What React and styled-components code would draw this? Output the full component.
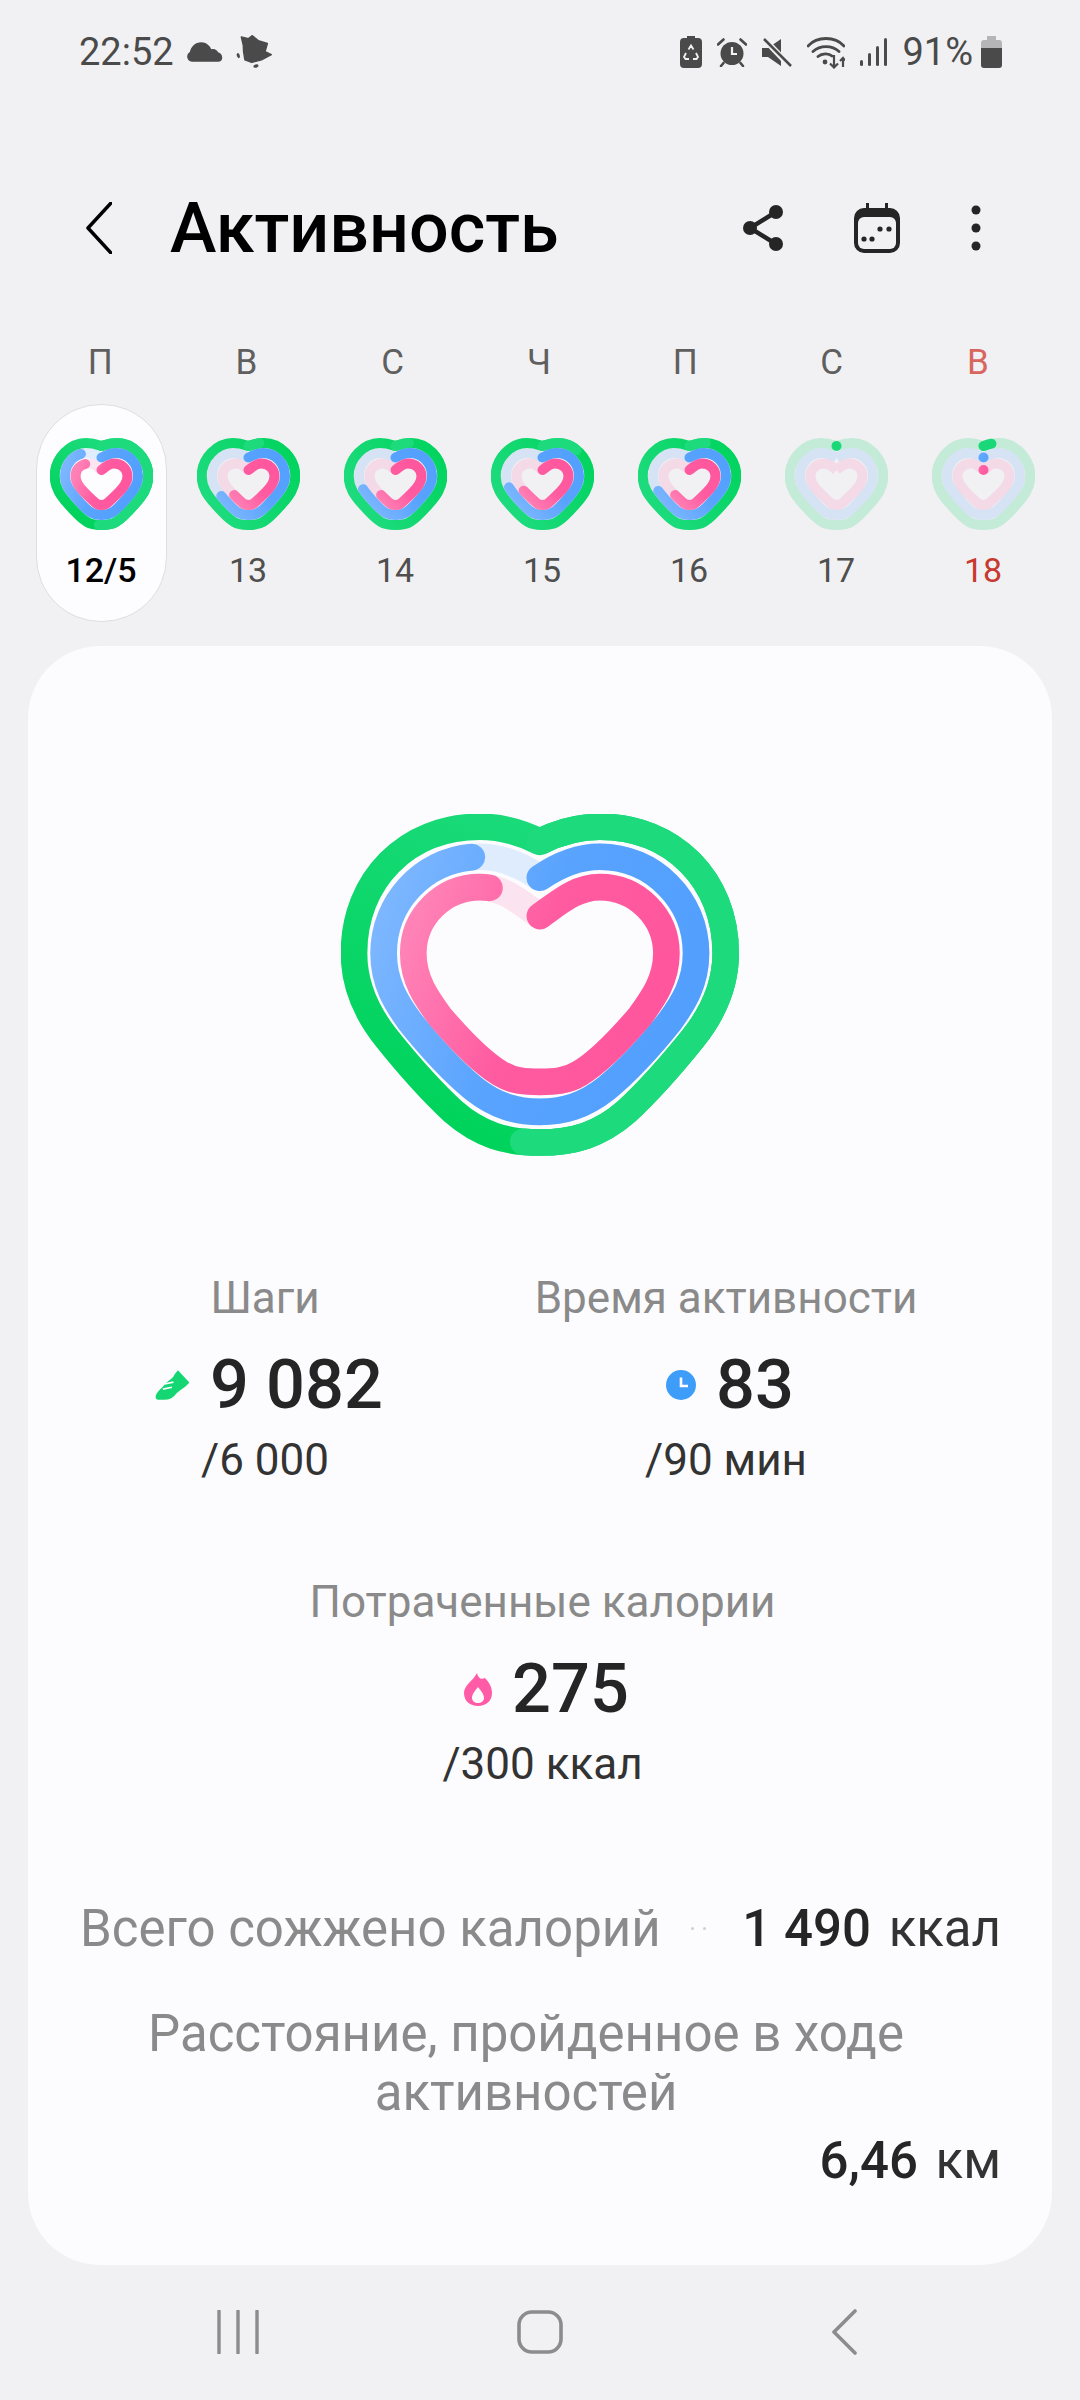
import styled, { createGlobalStyle } from "styled-components";
import { useId } from "react";

const GlobalStyle = createGlobalStyle`
  html, body {
    margin: 0;
    padding: 0;
    background: #f1f1f3;
    font-family: Roboto, "Liberation Sans", sans-serif;
  }
`;

// heart loops run clockwise from the notch, only the right half is written
function heartLoop(cx, startY, segs) {
  const mirror = (x) => 2 * cx - x;
  let d = `M${cx} ${startY}`;
  segs.forEach(([a, b, c, e, x, y]) => {
    d += ` C${a} ${b} ${c} ${e} ${x} ${y}`;
  });
  const points = [[cx, startY], ...segs.map((s) => [s[4], s[5]])];
  for (let i = segs.length - 1; i >= 0; i--) {
    const [a, b, c, e] = segs[i];
    const [px, py] = points[i];
    d += ` C${mirror(c)} ${e} ${mirror(a)} ${b} ${mirror(px)} ${py}`;
  }
  return d;
}

const bigHeart = {
  viewBox: "63 72 1195 1026",
  stroke: 80,
  green: heartLoop(660, 155, [
    [720, 125, 780, 110, 840, 110],
    [1060, 110, 1218, 270, 1218, 490],
    [1218, 590, 1180, 670, 1120, 745],
    [1060, 820, 990, 900, 920, 965],
    [840, 1035, 760, 1058, 660, 1058],
  ]),
  blue: heartLoop(660, 263, [
    [720, 222, 780, 200, 840, 200],
    [1000, 200, 1129, 330, 1129, 490],
    [1129, 580, 1090, 640, 1050, 695],
    [990, 770, 920, 845, 860, 895],
    [790, 950, 730, 966, 660, 966],
  ]),
  pink: heartLoop(660, 378, [
    [720, 335, 770, 291, 840, 291],
    [950, 291, 1040, 380, 1040, 490],
    [1040, 570, 1000, 625, 960, 680],
    [900, 750, 830, 820, 780, 850],
    [740, 875, 700, 876, 660, 876],
  ]),
};

const smallHeart = {
  viewBox: "0 0 103 92",
  stroke: 10,
  green: heartLoop(51.5, 8, [
    [56, 6.5, 60, 5, 67, 5],
    [83, 5, 98.3, 20, 98.3, 38],
    [98.3, 50, 92, 58, 85, 66],
    [78, 74, 71, 81, 66, 84],
    [61, 87, 56, 87, 51.5, 87],
  ]),
  blue: heartLoop(51.5, 19.5, [
    [56, 17, 60, 15, 66, 15],
    [78, 15, 88, 25, 88, 38],
    [88, 47, 83, 53, 77, 60],
    [71, 67, 65, 73, 61, 75],
    [57, 77, 54, 77, 51.5, 77],
  ]),
  pink: heartLoop(51.5, 32, [
    [55, 29, 59, 25.5, 64, 25.5],
    [71.5, 25.5, 77.5, 31, 77.5, 38],
    [77.5, 44, 74, 49, 69, 54],
    [64, 59, 59, 64, 56, 66],
    [54, 67, 53, 67, 51.5, 67],
  ]),
};

function Track({ d, stroke, color }) {
  return <path d={d} fill="none" stroke={color} strokeWidth={stroke} strokeLinejoin="miter" />;
}

function Ring({ d, stroke, color, progress }) {
  if (progress === undefined) return null;
  return (
    <path
      d={d}
      pathLength="100"
      fill="none"
      stroke={color}
      strokeWidth={stroke}
      strokeLinecap="round"
      strokeDasharray={`${progress} 300`}
    />
  );
}

function Heart({ shape, width, height, green, lap, blue, pink, wrapped }) {
  const id = useId();
  // finished rings fade towards their end: bottom left on the later days, top left on the first
  const fade = wrapped ? { x1: "1", y1: "0", x2: "0", y2: "0.7" } : { x1: "1", y1: "0.5", x2: "0", y2: "0.2" };
  return (
    <svg width={width} height={height} viewBox={shape.viewBox}>
      <defs>
        <linearGradient id={`${id}g`} x1={wrapped ? "1" : "0.2"} y1={wrapped ? "0" : "0.9"} x2={wrapped ? "0" : "0.7"} y2={wrapped ? "0.6" : "0"}>
          <stop offset="0" stopColor="#00d35c" />
          <stop offset="1" stopColor="#1ddb7d" />
        </linearGradient>
        <linearGradient id={`${id}b`} {...fade}>
          <stop offset="0" stopColor="#529ffe" />
          <stop offset="0.5" stopColor="#58a3fe" />
          <stop offset="1" stopColor="#7cb6ff" />
        </linearGradient>
        <linearGradient id={`${id}p`} {...fade}>
          <stop offset="0" stopColor="#ff569d" />
          <stop offset="0.5" stopColor="#ff5ba0" />
          <stop offset="1" stopColor="#ff82b6" />
        </linearGradient>
      </defs>
      <Track d={shape.green} stroke={shape.stroke} color="rgba(16,214,112,0.2)" />
      <Track d={shape.blue} stroke={shape.stroke} color="rgba(90,165,250,0.18)" />
      <Track d={shape.pink} stroke={shape.stroke} color="rgba(255,90,160,0.15)" />
      {green === 100 && <Track d={shape.green} stroke={shape.stroke} color={`url(#${id}g)`} />}
      {green < 100 && <Ring d={shape.green} stroke={shape.stroke} color="#1ad878" progress={green} />}
      {lap > 0 && <Ring d={shape.green} stroke={shape.stroke} color="#1ddb7d" progress={lap} />}
      <Ring d={shape.blue} stroke={shape.stroke} color={`url(#${id}b)`} progress={blue} />
      <Ring d={shape.pink} stroke={shape.stroke} color={`url(#${id}p)`} progress={pink} />
    </svg>
  );
}

const week = [
  { letter: "П", date: "12/5", green: 100, lap: 51, blue: 90, pink: 88 },
  { letter: "В", date: "13", green: 100, lap: 4, blue: 66, pink: 62, wrapped: true },
  { letter: "С", date: "14", green: 100, lap: 5, blue: 70, pink: 62, wrapped: true },
  { letter: "Ч", date: "15", green: 100, lap: 13, blue: 71, pink: 66, wrapped: true },
  { letter: "П", date: "16", green: 100, lap: 6, blue: 69, pink: 62, wrapped: true },
  { letter: "С", date: "17", green: 0 },
  { letter: "В", date: "18", green: 3, blue: 0, pink: 0, weekend: true },
];

const Page = styled.div`
  width: 1080px;
  height: 2400px;
  display: flex;
  flex-direction: column;
  overflow: hidden;
  background: #f1f1f3;
`;

const StatusBar = styled.div`
  height: 104px;
  padding: 0 78px 0 79px;
  display: flex;
  align-items: center;
  color: #4a4a4a;
  font-size: 38px;
`;

const StatusLeft = styled.div`
  display: flex;
  align-items: center;
  gap: 13px;
`;

const StatusRight = styled.div`
  margin-left: auto;
  display: flex;
  align-items: center;
  gap: 15px;
`;

const Battery = styled.svg`
  margin-left: -7px;
`;

const Header = styled.header`
  height: 228px;
  padding: 20px 99px 0 86px;
  box-sizing: border-box;
  display: flex;
  align-items: center;
`;

const Title = styled.h1`
  margin: 0 0 0 58px;
  font-size: 70px;
  font-weight: 500;
  color: #000;
`;

const Actions = styled.div`
  margin-left: auto;
  display: flex;
  align-items: center;
  gap: 71px;
`;

const Letters = styled.div`
  padding-left: 27px;
  display: grid;
  grid-template-columns: repeat(7, 146.3px);
  height: 60px;
  align-items: center;
`;

const Letter = styled.span`
  text-align: center;
  font-size: 35px;
  color: ${(p) => (p.$weekend ? "#d9655f" : "#5f5f5f")};
`;

const Dates = styled.div`
  margin-top: 12px;
  padding-left: 28.5px;
  display: grid;
  grid-template-columns: repeat(7, 147px);
`;

const DateCell = styled.div`
  height: 218px;
  width: 131px;
  margin-left: 7px;
  box-sizing: border-box;
  display: flex;
  flex-direction: column;
  align-items: center;
  padding-top: 33px;
  border-radius: 65px;
  border: 1px solid ${(p) => (p.$active ? "#dedee0" : "transparent")};
  background: ${(p) => (p.$active ? "#fdfdff" : "transparent")};
`;

const DateText = styled.span`
  margin-top: 20px;
  font-size: 34px;
  line-height: 40px;
  font-weight: ${(p) => (p.$active ? 500 : 400)};
  color: ${(p) => (p.$active ? "#000" : p.$weekend ? "#c8392e" : "#4f4f4f")};
`;

const Card = styled.main`
  margin: 24px 28px 0;
  height: 1619px;
  box-sizing: border-box;
  padding-top: 168px;
  border-radius: 72px;
  background: #fcfcfe;
  display: flex;
  flex-direction: column;
`;

const HeartWrap = styled.div`
  display: flex;
  justify-content: center;
`;

const StatsGrid = styled.div`
  margin-top: 117px;
  padding-left: 5px;
  display: grid;
  grid-template-columns: 464px 458px;
`;

const Stat = styled.div`
  display: flex;
  flex-direction: column;
  align-items: center;
`;

const SingleStat = styled(Stat)`
  margin-top: 92px;
  padding-left: 5px;
`;

const StatLabel = styled.span`
  font-size: 44px;
  line-height: 50px;
  color: #8a8a8a;
  white-space: nowrap;
`;

const StatValue = styled.div`
  margin-top: 21px;
  padding-left: 8px;
  display: flex;
  align-items: center;
  gap: 20px;
  font-size: 68.5px;
  line-height: 82px;
  font-weight: 500;
  color: #252525;
`;

const StatGoal = styled.span`
  margin-top: 9px;
  font-size: 44px;
  line-height: 50px;
  color: #333;
`;

const TotalRow = styled.div`
  margin-top: 110px;
  padding: 0 51px 0 52px;
  display: flex;
  align-items: center;
  font-size: 51px;
  line-height: 59px;
`;

const RowLabel = styled.span`
  color: #8a8a8a;
  white-space: nowrap;
`;

const RowDots = styled.span`
  margin-left: auto;
  display: flex;
  gap: 9px;
`;

const RowDot = styled.i`
  width: 3px;
  height: 3px;
  border-radius: 50%;
  background: #d0d0d2;
`;

const RowValue = styled.span`
  margin-left: 36px;
  color: #333;
  white-space: nowrap;
`;

const Strong = styled.b`
  font-weight: 500;
  color: #252525;
  margin-right: 5px;
`;

const DistanceLabel = styled.div`
  margin-top: 46px;
  padding: 0 80px 0 52px;
  text-align: center;
  font-size: 51px;
  line-height: 59px;
  color: #8a8a8a;
`;

const DistanceValue = styled.div`
  margin-top: 9px;
  padding-right: 51px;
  text-align: right;
  font-size: 51px;
  line-height: 59px;
  color: #333;
`;

const NavBar = styled.nav`
  flex: 1;
  padding: 0 0 2px 217px;
  display: flex;
  align-items: center;
  gap: 258px;
`;

const NavBack = styled.svg`
  margin-left: 10px;
`;

const StatusIcons = () => (
  <StatusRight>
    <svg width="22" height="32" viewBox="0 0 22 32">
      <path d="M7 0h8v2h3a4 4 0 0 1 4 4v22a4 4 0 0 1-4 4H4a4 4 0 0 1-4-4V6a4 4 0 0 1 4-4h3z" fill="#4a4a4a" />
      <path d="M8.500 13.500 11 9.500l2.500 4M16 17l2 4-1.500 2H13M9 23H5.500L4 21l2-4" fill="none" stroke="#f1f1f3" strokeWidth="1.800" />
    </svg>
    <svg width="30" height="29" viewBox="0 0 30 29">
      <circle cx="15" cy="15.500" r="11.500" fill="#4a4a4a" />
      <path d="M1 6.500 6.500 1.500M29 6.500 23.500 1.500M6.500 25 4 28M23.500 25l2.500 3" stroke="#4a4a4a" strokeWidth="2.600" strokeLinecap="round" />
      <path d="M15 9v7h5" fill="none" stroke="#f1f1f3" strokeWidth="2.200" />
    </svg>
    <svg width="30" height="29" viewBox="0 0 30 29">
      <path d="M0 10h6L19 1v27L6 19H0z" fill="#4a4a4a" />
      <path d="M3 2 28 28" stroke="#f1f1f3" strokeWidth="6" />
      <path d="M2 1 29 28" stroke="#4a4a4a" strokeWidth="2.500" />
    </svg>
    <svg width="38" height="33" viewBox="0 0 38 33">
      <path d="M1 10C10 0 28 0 37 10M6 15.500C13 9 25 9 32 15.500M11 20.500C15 17 22 17 25 20" fill="none" stroke="#4a4a4a" strokeWidth="2.800" strokeLinecap="round" />
      <circle cx="18" cy="26" r="2.400" fill="#4a4a4a" />
      <path d="M27 19v12M23 27.500l4 4 4-4M36 31V22M33 25l3-3 2 2.500" fill="none" stroke="#4a4a4a" strokeWidth="2.200" />
    </svg>
    <svg width="27" height="30" viewBox="0 0 27 30">
      <rect x="0" y="23" width="3" height="6" rx="1.500" fill="#4a4a4a" />
      <rect x="8" y="16" width="3" height="13" rx="1.500" fill="#4a4a4a" />
      <rect x="16" y="9" width="3" height="20" rx="1.500" fill="#4a4a4a" />
      <rect x="24" y="1" width="3" height="28" rx="1.500" fill="#4a4a4a" />
    </svg>
    <span>91%</span>
    <Battery width="21" height="32" viewBox="0 0 21 32">
      <path d="M6 0h9v4h3a3 3 0 0 1 3 3v5H0V7a3 3 0 0 1 3-3h3z" fill="#b5b5b7" />
      <path d="M0 12h21v17a3 3 0 0 1-3 3H3a3 3 0 0 1-3-3z" fill="#4a4a4a" />
    </Battery>
  </StatusRight>
);

export default function App() {
  return (
    <Page>
      <GlobalStyle />
      <StatusBar>
        <StatusLeft>
          <span>22:52</span>
          <svg width="36" height="20" viewBox="28 42 104 58">
            <path d="M42 99a15 15 0 0 1-6-28C40 55 52 43 69 43c15 0 25 10 29 20 8-3 17 1 20 9 14 2 18 27 0 27z" fill="#4a4a4a" />
          </svg>
          <svg width="36" height="34" viewBox="166 25 110 102">
            <path d="M182 30l22 5 12-9 18 15 28 9-7 25 19 9-30 16-30 8-21-8-4-25-1-20z" fill="#4a4a4a" stroke="#4a4a4a" strokeWidth="4" strokeLinejoin="round" />
            <ellipse cx="173" cy="87" rx="4.500" ry="8" transform="rotate(-20 173 87)" fill="#4a4a4a" />
            <ellipse cx="227" cy="119" rx="8" ry="5" transform="rotate(-15 227 119)" fill="#4a4a4a" />
          </svg>
        </StatusLeft>
        <StatusIcons />
      </StatusBar>
      <Header>
        <svg width="26" height="52" viewBox="0 0 26 52">
          <path d="M25 1 2 26l23 25" fill="none" stroke="#000" strokeWidth="3.500" strokeLinecap="round" strokeLinejoin="round" />
        </svg>
        <Title>Активность</Title>
        <Actions>
          <svg width="40" height="46" viewBox="0 0 40 46">
            <path d="M33 7 7 23l26 16" fill="none" stroke="#252525" strokeWidth="4.500" />
            <circle cx="33" cy="7" r="7" fill="#252525" />
            <circle cx="7" cy="23" r="7" fill="#252525" />
            <circle cx="33" cy="39" r="7" fill="#252525" />
          </svg>
          <svg width="46" height="50" viewBox="0 0 46 50">
            <path d="M12 0h3v5h16V0h3v5h2a10 10 0 0 1 10 10v25a10 10 0 0 1-10 10H10A10 10 0 0 1 0 40V15A10 10 0 0 1 10 5h2z" fill="#252525" />
            <rect x="4" y="14" width="38" height="32" rx="6" fill="#f1f1f3" />
            <circle cx="10" cy="36" r="2.600" fill="#252525" />
            <circle cx="18" cy="36" r="2.600" fill="#252525" />
            <circle cx="26" cy="26" r="2.600" fill="#252525" />
            <circle cx="35" cy="26" r="2.600" fill="#252525" />
          </svg>
          <svg width="10" height="46" viewBox="0 0 10 46">
            <circle cx="5" cy="5" r="4.500" fill="#252525" />
            <circle cx="5" cy="23" r="4.500" fill="#252525" />
            <circle cx="5" cy="41" r="4.500" fill="#252525" />
          </svg>
        </Actions>
      </Header>
      <Letters>
        {week.map((d, i) => (
          <Letter key={i} $weekend={d.weekend}>{d.letter}</Letter>
        ))}
      </Letters>
      <Dates>
        {week.map((d, i) => (
          <DateCell key={i} $active={i === 0}>
            <Heart shape={smallHeart} width={103} height={92} {...d} />
            <DateText $active={i === 0} $weekend={d.weekend}>{d.date}</DateText>
          </DateCell>
        ))}
      </Dates>
      <Card>
        <HeartWrap>
          <Heart shape={bigHeart} width={398} height={342} green={100} lap={51.5} blue={92} pink={92} />
        </HeartWrap>
        <StatsGrid>
          <Stat>
            <StatLabel>Шаги</StatLabel>
            <StatValue>
              <svg width="35" height="34" viewBox="20 28 110 96">
                <path d="M92 30l36 38c-10 14-28 22-43 37-10 13-20 17-35 17H30c-8 0-10-7-6-17 6-13 16-17 26-30 10-13 25-17 32-33z" fill="#14d672" />
                <path d="M50 73l28-6M45 89l28-6" stroke="#fcfcfe" strokeWidth="5" />
              </svg>
              9 082
            </StatValue>
            <StatGoal>/6 000</StatGoal>
          </Stat>
          <Stat>
            <StatLabel>Время активности</StatLabel>
            <StatValue>
              <svg width="30" height="30" viewBox="0 0 30 30">
                <circle cx="15" cy="15" r="15" fill="#3f9dfa" />
                <path d="M15 7.500v8.500h7" fill="none" stroke="#fff" strokeWidth="2.600" />
              </svg>
              83
            </StatValue>
            <StatGoal>/90 мин</StatGoal>
          </Stat>
        </StatsGrid>
        <SingleStat>
          <StatLabel>Потраченные калории</StatLabel>
          <StatValue>
            <svg width="28" height="33" viewBox="0 0 28 33">
              <path fillRule="evenodd" d="M13 0c1 5 4 7 8 5 5 5 7 10 7 15 0 8-6 13-14 13S0 28 0 20C0 12 9 8 13 0zM14 14c-3 4-6 7-6 11 0 3 3 5 6 5s6-2 6-5c0-4-3-7-6-11z" fill="#ff5ba6" />
            </svg>
            275
          </StatValue>
          <StatGoal>/300 ккал</StatGoal>
        </SingleStat>
        <TotalRow>
          <RowLabel>Всего сожжено калорий</RowLabel>
          <RowDots>
            <RowDot />
            <RowDot />
          </RowDots>
          <RowValue><Strong>1 490</Strong> ккал</RowValue>
        </TotalRow>
        <DistanceLabel>Расстояние, пройденное в ходе<br />активностей</DistanceLabel>
        <DistanceValue><Strong>6,46</Strong> км</DistanceValue>
      </Card>
      <NavBar>
        <svg width="42" height="44" viewBox="0 0 42 44">
          <path d="M2 1v42M21 1v42M40 1v42" stroke="#8c8c8c" strokeWidth="3.400" strokeLinecap="round" />
        </svg>
        <svg width="46" height="44" viewBox="0 0 46 44">
          <rect x="2" y="2" width="42" height="40" rx="13" fill="none" stroke="#8c8c8c" strokeWidth="3.600" />
        </svg>
        <NavBack width="26" height="46" viewBox="0 0 26 46">
          <path d="M24 2 3 23l21 21" fill="none" stroke="#8c8c8c" strokeWidth="3.600" strokeLinecap="round" strokeLinejoin="round" />
        </NavBack>
      </NavBar>
    </Page>
  );
}
